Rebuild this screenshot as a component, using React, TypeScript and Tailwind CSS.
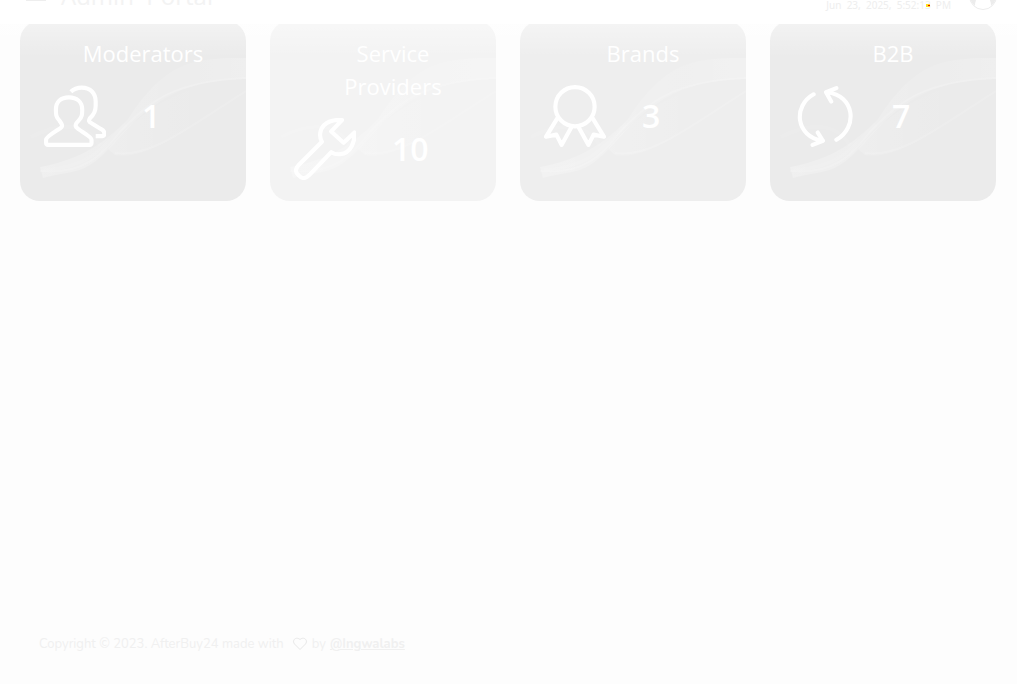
import React from "react";

const icon = "h-[62px] w-[62px] shrink-0";

function UsersIcon() {
  return (
    <svg viewBox="0 0 60 60" className={icon} fill="none" stroke="currentColor" strokeWidth="4" strokeLinecap="round" strokeLinejoin="round">
      <path d="M15.500 42C19.500 39.500 16.500 37 15 34.500C11.500 31 11.500 28 11.500 24C11.500 16 16.500 12 24 12C31.500 12 37 16 37 24C37 28 37 31 33.500 34.500C31 37 29 39.500 32.500 42C35 44.500 46 50 46 53V56C46 57.500 45.500 58 44 58H4C2.500 58 2 57.500 2 56V53C2 50 12 44.500 15.500 42Z" />
      <path strokeLinecap="butt" d="M26 6.500C29 3.500 32 2.500 36.500 2.500C45 2.500 50 8 50 16V20C50 26 48 29 44.500 32C43 34.500 43 35.500 46 37L55 42.500C58 44 58.500 45 58.500 47C58.500 49 57 49.500 55 49.500H50" />
    </svg>
  );
}

function WrenchIcon() {
  return (
    <svg viewBox="0 0 60 60" className={icon} fill="none" stroke="currentColor" strokeWidth="4" strokeLinejoin="round">
      <path d="M46.500 2L36 13L48 24L58.500 14C59 23 55 34 45 35C41 35.500 39 35 36 33L15 55C11 59 8 59 5 56L4 55C1 52 1 49 5 45L27 23C24 18 25 11 29 7C34 2 40 1.500 46.500 2Z" />
    </svg>
  );
}

function MedalIcon() {
  return (
    <svg viewBox="0 0 60 60" className={icon} fill="none" stroke="currentColor" strokeWidth="4" strokeLinecap="round" strokeLinejoin="round">
      <circle cx="30" cy="21" r="19" />
      <path d="M13 32L2 50L12 48L17 58L27 40M47 32L58 50L48 48L43 58L33 40" />
    </svg>
  );
}

function RefreshIcon() {
  return (
    <svg viewBox="0 0 60 60" className={icon} fill="none" stroke="currentColor" strokeWidth="4" strokeLinecap="round" strokeLinejoin="round">
      <path d="M19 9C-1 20 1 50 28 54M41 3L31 7L36 16M32 7C59 10 62 41 41 53M23 46L28 54L18 58" />
    </svg>
  );
}

function Waves() {
  return (
    <svg viewBox="0 0 226 180" preserveAspectRatio="none" aria-hidden="true" className="absolute inset-0 h-full w-full">
      <defs>
        <linearGradient id="ribbon" x1="0" x2="1">
          <stop offset="0" stopColor="white" stopOpacity="0.24" />
          <stop offset="0.4" stopColor="white" stopOpacity="0.16" />
          <stop offset="0.7" stopColor="white" stopOpacity="0.1" />
          <stop offset="1" stopColor="white" stopOpacity="0.2" />
        </linearGradient>
        <linearGradient id="veil" x1="0" x2="1">
          <stop offset="0" stopColor="white" stopOpacity="0.16" />
          <stop offset="0.5" stopColor="white" stopOpacity="0.03" />
          <stop offset="1" stopColor="white" stopOpacity="0" />
        </linearGradient>
      </defs>
      <path fill="url(#ribbon)" d="M20 146C62 138 84 122 108 98C122 76 140 54 165 44C184 37 205 37 226 37V58C185 59 160 66 132 86C104 106 94 128 70 144C56 153 38 152 23 157Z" />
      <path fill="url(#veil)" d="M88 128C113 96 165 57 226 59V71C180 100 130 140 95 134Z" />
      <path fill="none" stroke="white" strokeOpacity="0.16" strokeWidth="2" d="M20 150C66 154 82 133 101 110C129 80 155 60 226 57" />
      <path fill="none" stroke="white" strokeOpacity="0.08" strokeWidth="4" d="M24 149C70 146 84 126 106 103" />
      <path fill="none" stroke="white" strokeOpacity="0.14" strokeWidth="2" d="M226 70C170 105 132 137 95 132" />
      <path fill="none" stroke="white" strokeOpacity="0.08" strokeWidth="4" d="M11 116C35 104 65 98 80 125" />
    </svg>
  );
}

const cards = [
  { title: "Moderators", value: 1, tone: "bg-[#ebebeb]", Icon: UsersIcon },
  { title: "Service Providers", value: 10, tone: "bg-[#f3f3f3]", Icon: WrenchIcon },
  { title: "Brands", value: 3, tone: "bg-[#eeeeee]", Icon: MedalIcon },
  { title: "B2B", value: 7, tone: "bg-[#ebebeb]", Icon: RefreshIcon },
];

export default function App() {
  return (
    <div className="flex min-h-screen flex-col bg-[#fdfdfd] font-['Open_Sans','Noto_Sans',sans-serif]">
      <header className="relative z-10 flex h-6 items-end justify-between overflow-hidden bg-white pr-5 pl-[26px]">
        <div className="flex items-end gap-[15px] pb-3">
          <button aria-label="Open menu" className="mb-[11px] flex w-5 flex-col gap-1">
            <span className="h-0.5 bg-[#eeeeee]" />
            <span className="h-0.5 bg-[#eeeeee]" />
            <span className="h-0.5 bg-[#eeeeee]" />
          </button>
          <h1 className="text-2xl leading-8 whitespace-pre text-[#f3f3f3]">Admin  Portal</h1>
        </div>
        <div className="flex items-end gap-[18px] pb-3">
          <time className="relative font-['Noto_Sans',sans-serif] text-[10px] leading-[14px] whitespace-pre text-[#eeeeee]">
            Jun  23,  2025,  5:52:13  PM
            <span className="absolute right-[21px] bottom-[5px] h-[3px] w-1 bg-yellow-300">
              <span className="absolute right-0 bottom-px h-px w-0.5 bg-red-600" />
            </span>
          </time>
          <button aria-label="Account" className="mb-0.5">
            <svg viewBox="0 0 28 28" className="h-7 w-7" fill="none">
              <circle cx="14" cy="14" r="13.500" stroke="#ececec" />
              <path fill="#ececec" d="M1 15H9Q6 18 6 24Q1 20 1 15ZM19 15H27Q27 20 22 24Q22 18 19 15Z" />
            </svg>
          </button>
        </div>
      </header>

      <main className="relative -mt-[3px] grow pr-[21px] pl-5">
        <section className="grid grid-cols-4 gap-6">
          {cards.map(({ title, value, tone, Icon }) => (
            <article key={title} className={`relative h-[180px] overflow-hidden rounded-[20px] text-white ${tone}`}>
              <Waves />
              <div className="relative px-6 pt-4">
                <h2 className="mr-2 ml-7 text-center text-[22px] leading-[33px]">{title}</h2>
                <div className="flex items-center gap-9 pt-[15px]">
                  <Icon />
                  <strong className="text-[32px] leading-[60px] font-semibold">{value}</strong>
                </div>
              </div>
            </article>
          ))}
        </section>
        <div className="pointer-events-none absolute inset-x-0 top-0 h-9 bg-linear-to-b from-white/40 to-transparent" />
      </main>

      <footer className="px-[39px] pb-[30px] font-['Nunito','Noto_Sans',sans-serif] text-[13px] leading-5 text-[#f0f0f0]">
        <p className="flex items-center gap-1">
          <span>Copyright © 2023. AfterBuy24 made with</span>
          <svg viewBox="0 0 16 16" aria-label="love" className="ml-1 h-4 w-4" fill="none" stroke="#e8e8e8">
            <path d="M8 13.500L2.500 8C-.5 4.500 4 0 8 3.500C12 0 16.500 4.500 13.500 8Z" />
          </svg>
          <span>by</span>
          <a href="#" className="font-bold underline">@Ingwalabs</a>
        </p>
      </footer>
    </div>
  );
}
